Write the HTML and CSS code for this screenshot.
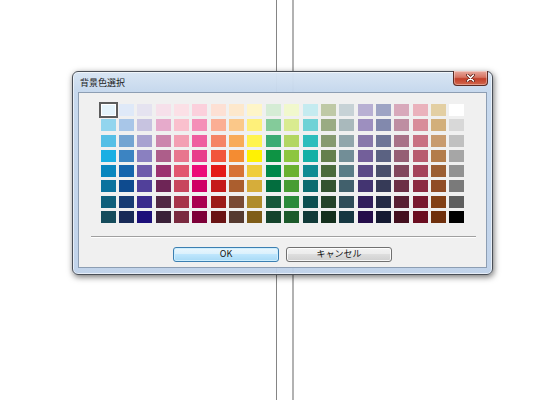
FILE: index.html
```html
<!DOCTYPE html>
<html lang="ja">
<head>
    <meta charset="UTF-8">
    <meta name="viewport" content="width=device-width, initial-scale=1.0">
    <title>背景色選択</title>
    <link rel="stylesheet" href="styles.css">
</head>
<body>
    <div class="dialog">
        <div class="titlebar">
            <span class="title">背景色選択</span>
            <button class="close-button" aria-label="閉じる">
                <svg width="9" height="8" viewBox="0 0 9 8">
                    <path d="M1.5 1 L7.5 7 M7.5 1 L1.5 7" stroke="#5a1a10" stroke-width="3" stroke-linecap="round"/>
                    <path d="M1.5 1 L7.5 7 M7.5 1 L1.5 7" stroke="#fff" stroke-width="1.6" stroke-linecap="round"/>
                </svg>
            </button>
        </div>
        <div class="client">
            <div class="palette" id="palette"></div>
            <div class="separator"></div>
            <div class="buttons">
                <button class="btn btn-default">OK</button>
                <button class="btn">キャンセル</button>
            </div>
        </div>
    </div>

    <script>
        // palette colours, one column (top to bottom) per entry
        const columns = [
            ["#e4f3fb", "#92d5ee", "#55bfe6", "#1aafe3", "#0a87bf", "#0b729e", "#0f5f7b", "#164c5c"],
            ["#dfe9f8", "#a8c6e8", "#73a4d2", "#3c84c2", "#1565ad", "#0e4b8f", "#183c74", "#182a57"],
            ["#e5e3f0", "#c7c3e0", "#a8a2d0", "#8a80c0", "#6f5cab", "#51409a", "#3a2b8d", "#1c0f7a"],
            ["#f6e0ea", "#e6aacb", "#cc85ad", "#ad5e8a", "#9c3270", "#6e2556", "#522844", "#3a2138"],
            ["#fbe0e6", "#fac0cd", "#f39fb3", "#e8768e", "#e2566f", "#c8465d", "#a7344a", "#7a2a3f"],
            ["#fbd0dc", "#f48fb8", "#ef5ea0", "#e83f8b", "#ec0c78", "#cf0065", "#aa0050", "#7d0038"],
            ["#fde0d4", "#fbae94", "#f58465", "#f2563c", "#e41a17", "#c51a1a", "#9c1b18", "#6a1415"],
            ["#fde8cc", "#fbc889", "#f8ab58", "#f48c32", "#d77236", "#ab5e2e", "#7a4a34", "#563a30"],
            ["#fef5c8", "#fef07a", "#fff450", "#fff203", "#efcd3c", "#d6ad3a", "#af8c2c", "#7f5d18"],
            ["#d5ecd5", "#84cb9a", "#3bab73", "#0e9344", "#00884a", "#036d3e", "#17583a", "#14432c"],
            ["#f1f8cd", "#d9eb90", "#b2d662", "#8dc63f", "#6ab131", "#479d33", "#2a8a3a", "#1c5a2b"],
            ["#c5ebf0", "#6fd2d6", "#2dbdbc", "#13b0a6", "#0f8b92", "#0b6b70", "#0d4f50", "#113a38"],
            ["#bfc9a6", "#9aab83", "#869a70", "#657f4d", "#4a6a3c", "#345330", "#24432a", "#15301e"],
            ["#c7d2d6", "#a9b9bc", "#91a6ab", "#728e97", "#5a7d87", "#41606c", "#2f4d58", "#163741"],
            ["#b8b0d3", "#9d8fbf", "#8878aa", "#735f9a", "#5c4b87", "#433471", "#321f5c", "#250d4a"],
            ["#9ea4c4", "#8289ad", "#6e7597", "#5b6282", "#4a4f6b", "#363a57", "#242a45", "#151a32"],
            ["#d8a9bb", "#be8ea2", "#a87288", "#955e74", "#82475d", "#6c2f45", "#581f33", "#44101f"],
            ["#eab2bc", "#d88d9a", "#c87182", "#b85c6f", "#a4435a", "#8c2a41", "#79192f", "#6a0d20"],
            ["#e3cfa3", "#d2af7b", "#c89b6e", "#b37c4a", "#9b5e32", "#904c25", "#824016", "#6f300d"],
            ["#ffffff", "#d8d8d8", "#c0c0c0", "#a6a6a6", "#929292", "#7a7a7a", "#5e5e5e", "#000000"]
        ];

        const palette = document.getElementById("palette");
        columns.forEach(function(column, c) {
            column.forEach(function(color, r) {
                const swatch = document.createElement("div");
                swatch.className = "swatch";
                if (c === 0 && r === 0) {
                    swatch.classList.add("selected");
                }
                swatch.style.backgroundColor = color;
                palette.appendChild(swatch);
            });
        });
    </script>
</body>
</html>
```

FILE: styles.css
```css
html, body {
    height: 100%;
}
body {
    margin: 0;
    font-family: "Noto Sans CJK JP", "Noto Sans", sans-serif;
    background:
        linear-gradient(to right,
            transparent 276px, #858585 276px, #858585 277px, transparent 277px,
            transparent 292px, #b2b2b2 292px, #b2b2b2 294px, transparent 294px),
        #fff;
    overflow: hidden;
}
.dialog {
    width: 421px;
    height: 204px;
    margin: 71px 0 0 72px;
    box-sizing: border-box;
    padding: 0 5px 6px;
    border: 1px solid #4a4f57;
    border-radius: 6px;
    background: linear-gradient(to bottom, rgba(216, 229, 243, 0.98), rgba(198, 216, 237, 0.97) 18px, rgba(190, 209, 233, 0.95));
    box-shadow: 1px 2px 6px rgba(0, 0, 0, 0.55), inset 0 0 0 1px rgba(255, 255, 255, 0.6);
    display: flex;
    flex-direction: column;
}
.titlebar {
    height: 20px;
    display: flex;
    align-items: flex-start;
    justify-content: space-between;
}
.title {
    font-size: 9px;
    color: #1b1b1b;
    margin: 5px 0 0 2px;
    line-height: 11px;
}
.close-button {
    width: 35px;
    height: 15px;
    margin: -1px -1px 0 0;
    padding: 0;
    border: 1px solid #5b2c25;
    border-top: none;
    border-radius: 0 0 4px 4px;
    background: linear-gradient(to bottom, #e8a99d, #d67462 45%, #c2402a 55%, #d2674e);
    box-shadow: inset 0 0 0 1px rgba(255, 255, 255, 0.35);
    display: flex;
    align-items: center;
    justify-content: center;
}
.client {
    flex: 1;
    background: #f0f0f0;
    border: 1px solid #8d9eb3;
    display: flex;
    flex-direction: column;
    align-items: center;
    padding-top: 11px;
}
.palette {
    display: grid;
    grid-auto-flow: column;
    grid-template-rows: repeat(8, 12px);
    grid-template-columns: repeat(20, 15px);
    row-gap: 3.25px;
    column-gap: 3.35px;
}
.swatch {
    width: 15px;
    height: 12px;
}
.swatch.selected {
    box-shadow: inset 0 0 0 1px #fff, 0 0 0 2px #5c5c5c;
}
.separator {
    align-self: stretch;
    margin: 13px 10px 0 12px;
    border-top: 1px solid #a0a0a0;
    border-bottom: 1px solid #fff;
}
.buttons {
    display: flex;
    gap: 7px;
    margin-top: 9px;
}
.btn {
    width: 106px;
    height: 15px;
    padding: 0;
    font-family: "Noto Sans CJK JP", "Noto Sans", sans-serif;
    font-size: 9px;
    line-height: 12px;
    color: #111;
    border: 1px solid #707070;
    border-radius: 3px;
    background: linear-gradient(to bottom, #f2f2f2, #ebebeb 50%, #dddddd 50%, #cfcfcf);
    box-shadow: inset 0 0 0 1px rgba(255, 255, 255, 0.8);
}
.btn-default {
    border-color: #3c7fb1;
    background: linear-gradient(to bottom, #eaf6fd, #d9f0fc 50%, #bee6fd 50%, #a7d9f5);
    box-shadow: inset 0 0 0 1px #cdeefe;
}
```
